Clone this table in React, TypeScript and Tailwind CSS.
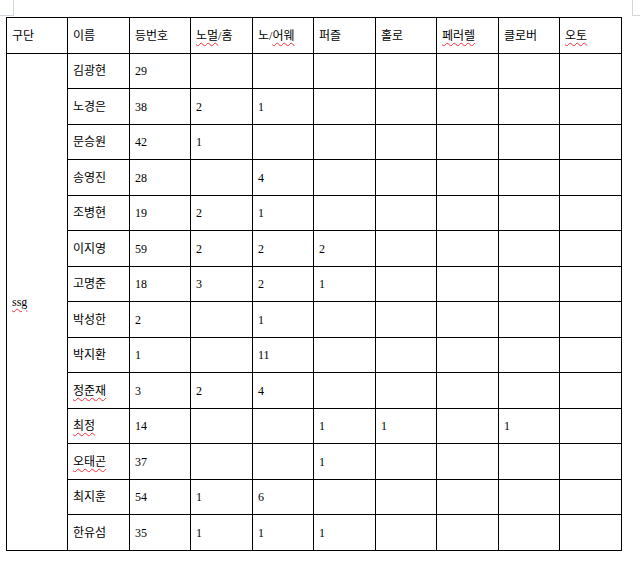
const headers = ["구단", "이름", "등번호", "노멀/홈", "노/어웨", "퍼즐", "홀로", "페러렐", "클로버", "오토"];

const rows: (string | number)[][] = [
  ["김광현", 29],
  ["노경은", 38, 2, 1],
  ["문승원", 42, 1],
  ["송영진", 28, "", 4],
  ["조병현", 19, 2, 1],
  ["이지영", 59, 2, 2, 2],
  ["고명준", 18, 3, 2, 1],
  ["박성한", 2, "", 1],
  ["박지환", 1, "", 11],
  ["정준재", 3, 2, 4],
  ["최정", 14, "", "", 1, 1, "", 1],
  ["오태곤", 37, "", "", 1],
  ["최지훈", 54, 1, 6],
  ["한유섬", 35, 1, 1, 1],
];

const typo = new Set(["정준재", "최정", "오태곤"]);

function Wavy({ children }: { children: React.ReactNode }) {
  return (
    <span className="underline decoration-wavy decoration-red-500 decoration-1 underline-offset-2">
      {children}
    </span>
  );
}

function headerLabel(h: string) {
  if (h === "노멀/홈") return <><Wavy>노멀</Wavy>/홈</>;
  if (h === "노/어웨") return <>노/<Wavy>어웨</Wavy></>;
  if (h === "페러렐" || h === "오토") return <Wavy>{h}</Wavy>;
  return h;
}

const cell = "border border-black pl-[5px] align-middle text-left font-normal";

export default function App() {
  return (
    <div
      className="relative w-[640px] h-[579px] bg-white text-black text-[12px]"
      style={{ fontFamily: '"Liberation Serif", "Noto Sans CJK KR", serif' }}
    >
      {/* page corner marks */}
      <div className="absolute left-0 top-0 w-[14px] h-[16px] border-r border-b border-gray-300" />
      <div className="absolute right-0 top-0 w-[8px] h-[16px] border-l border-b border-gray-300" />

      <div className="pt-[17px] pl-[6px]">
        <table className="border-collapse table-fixed w-[616px]">
          <colgroup>
            {headers.map((h, i) => (
              <col key={h} className={i % 2 === 0 ? "w-[61px]" : "w-[62px]"} />
            ))}
          </colgroup>
          <thead>
            <tr className="h-[36px]">
              {headers.map((h) => (
                <th key={h} className={cell}>
                  {headerLabel(h)}
                </th>
              ))}
            </tr>
          </thead>
          <tbody>
            {rows.map((r, i) => {
              const vals = r.slice(1);
              return (
                <tr key={i} className={i % 2 === 0 ? "h-[35px]" : "h-[36px]"}>
                  {i === 0 && (
                    <td rowSpan={rows.length} className={cell}>
                      <Wavy>ssg</Wavy>
                    </td>
                  )}
                  <td className={cell}>
                    {typo.has(r[0] as string) ? <Wavy>{r[0]}</Wavy> : r[0]}
                  </td>
                  {Array.from({ length: 8 }).map((_, j) => (
                    <td key={j} className={cell}>
                      {vals[j] ?? ""}
                    </td>
                  ))}
                </tr>
              );
            })}
          </tbody>
        </table>
      </div>
    </div>
  );
}
